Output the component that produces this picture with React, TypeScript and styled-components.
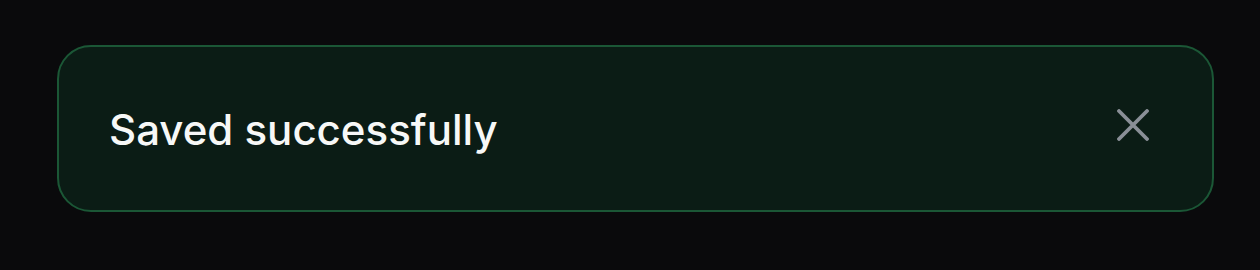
import React from "react";
import styled, { createGlobalStyle } from "styled-components";

const Global = createGlobalStyle`
  html, body { margin: 0; padding: 0; background: #0a0a0c; }
  body { font-family: Inter, "Noto Sans", sans-serif; }
`;

const Page = styled.div`
  padding: 45px 46px 58px 57px;
`;

const Toast = styled.div`
  box-sizing: border-box;
  height: 167px;
  display: flex;
  align-items: center;
  justify-content: space-between;
  padding: 0 63px 0 50px;
  background: #0b1c15;
  border: 2px solid #1b5736;
  border-radius: 34px;
`;

const Message = styled.span`
  color: #f7f8f7;
  font-size: 42px;
  font-weight: 500;
  letter-spacing: 0;
  margin-top: 2px;
`;

const Close = styled.button`
  background: none;
  border: 0;
  padding: 0;
  width: 32px;
  height: 32px;
  display: flex;
  align-items: center;
  justify-content: center;
  color: #8a8f97;
  margin-top: -8px;
  cursor: pointer;
`;

export default function App() {
  return (
    <>
      <Global />
      <Page>
        <Toast>
          <Message>Saved successfully</Message>
          <Close aria-label="Close">
            <svg width="32" height="32" viewBox="0 0 32 32" fill="none">
              <path d="M2 2 L30 30 M30 2 L2 30" stroke="currentColor" strokeWidth="3.8" strokeLinecap="round" />
            </svg>
          </Close>
        </Toast>
      </Page>
    </>
  );
}
